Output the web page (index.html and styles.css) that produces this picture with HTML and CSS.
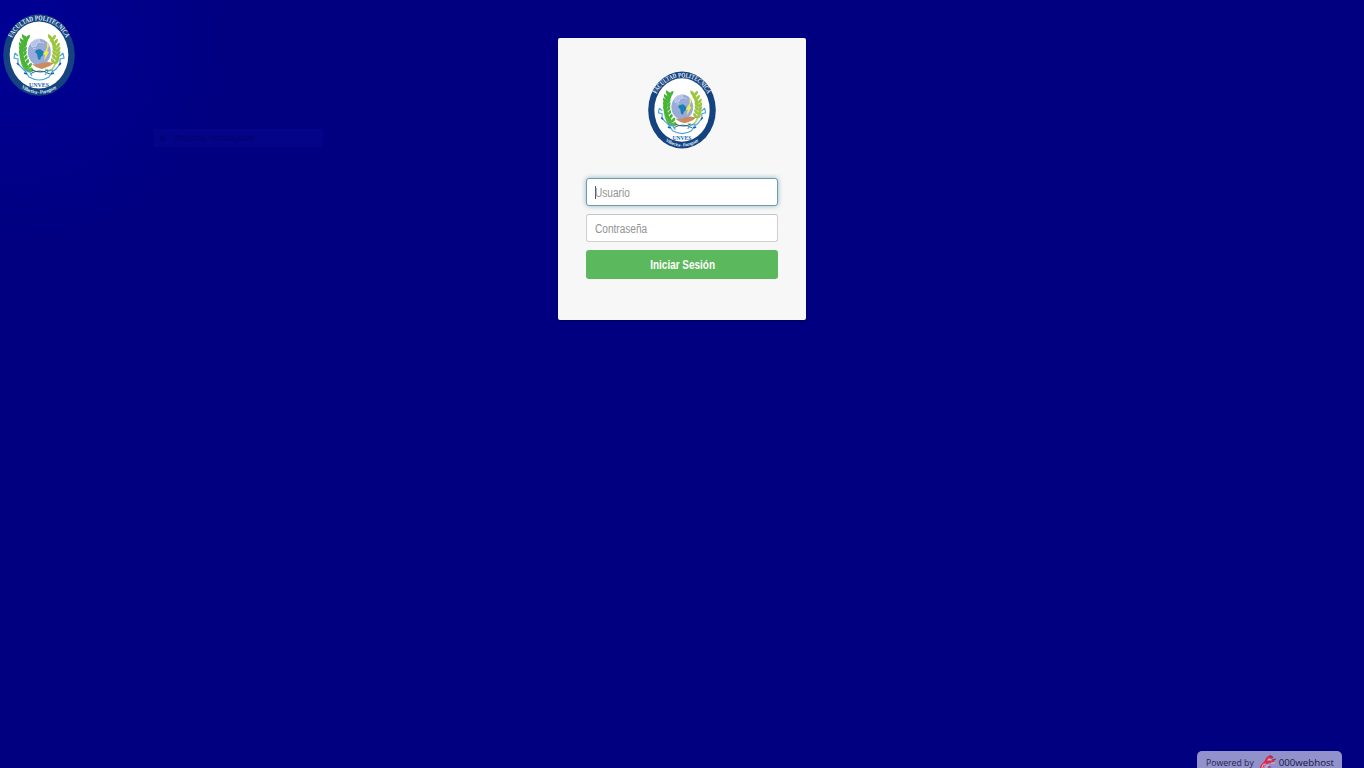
FILE: index.html
```html
<!DOCTYPE html>
<html lang="es">
<head>
<meta charset="utf-8">
<title>Iniciar Sesión</title>
<link rel="stylesheet" href="styles.css">
</head>
<body>
<svg class="defs" aria-hidden="true">
  <defs>
    <path id="arc-top" d="M8.5 25.5C19 0 53 0 63.5 25.5"/>
    <path id="arc-bottom" d="M15 71.5Q36 88 57 71.5"/>
    <path id="leaf" d="M0 0Q-5-1-4-6Q1-4 0 0Q0-5 4-5Q4 0 0 0"/>
    <symbol id="crest" viewBox="0 0 72 82">
      <ellipse cx="36" cy="41" rx="35.8" ry="40.8" fill="#15437f"/>
      <ellipse cx="36" cy="41" rx="29.3" ry="33.6" fill="#fff"/>
      <text class="crest-name"><textPath href="#arc-top" startOffset="50%" text-anchor="middle" textLength="68" lengthAdjust="spacingAndGlyphs">FACULTAD POLITECNICA</textPath></text>
      <path d="M24 23Q16 34 19.500 47T30 55" fill="none" stroke="#55b741" stroke-width="4"/>
      <g fill="#48b435">
        <use href="#leaf" x="23" y="26"/><use href="#leaf" x="21" y="30"/><use href="#leaf" x="20" y="34"/><use href="#leaf" x="20" y="38"/><use href="#leaf" x="20" y="42"/><use href="#leaf" x="21" y="46"/><use href="#leaf" x="22.500" y="50"/><use href="#leaf" x="25" y="54"/>
      </g>
      <path d="M48 23Q57 36 53 48T42 55" fill="none" stroke="#b9d878" stroke-width="2"/>
      <g fill="#9cc53f">
        <use href="#leaf" x="49" y="26"/><use href="#leaf" x="51" y="30"/><use href="#leaf" x="53" y="34"/><use href="#leaf" x="53.500" y="38"/><use href="#leaf" x="53.500" y="42"/><use href="#leaf" x="53" y="46"/><use href="#leaf" x="52" y="50"/>
      </g>
      <ellipse cx="36.300" cy="38" rx="12.500" ry="14" fill="#fff"/>
      <ellipse cx="36.300" cy="38" rx="11.500" ry="13.300" fill="#98abd9"/>
      <path d="M28 30l3-4 5-1 1 3-3 1-1 3-4 1zM30 35l3-1M37 28l4 1" fill="#b4c3e6" stroke="#d5def0" stroke-width=".7"/>
      <path d="M33 36l4-1 4 3-1 3-2 2-1 3-2-1-1-5-2-2z" fill="#1a7fb5"/>
      <path d="M44 27l2 5-2 5 2 1-5 9 1-6-2-1 4-6z" fill="#f0ed4b"/>
      <path d="M29 50q6 1 10-1l6-1 6 1-4 3-8 3q-6-1-10-5z" fill="#c98b5f"/>
      <path d="M27 60q9-6 20 0M29 56q9 4 16 0" fill="none" stroke="#286184" stroke-width="1"/>
      <path d="M12 39l-1 5 4 1 0 5 4 4 4 4 3 5q10 6 20 0l3-5 4-3 4-5 0-5 4-1-1-5M12 39l3 3M60 39l-3 3M21 56l5 1 3 5M50 56l-5 1-3 4" fill="none" stroke="#4aa5dc" stroke-width="1.200"/>
      <path d="M14 49l2 2M21 59l3 1M51 59l-3 1M58 49l-2 2" stroke="#1d60a5" stroke-width="1.700"/>
      <text x="36" y="73" class="crest-short" text-anchor="middle" textLength="20">UNVES</text>
      <text class="crest-place"><textPath href="#arc-bottom" startOffset="50%" text-anchor="middle" textLength="38">Villarrica - Paraguay</textPath></text>
    </symbol>
  </defs>
</svg>
<div class="brand"><svg class="brand-logo"><use href="#crest"/></svg></div>
<div class="ghost"><i class="ghost-icon"></i><span class="ghost-text">Recorte rectangular</span></div>
<main class="card">
  <svg class="card-logo"><use href="#crest"/></svg>
  <form class="form">
    <div class="field field-focus"><i class="caret"></i><span class="narrow">Usuario</span></div>
    <div class="field"><span class="narrow">Contraseña</span></div>
    <button class="submit" type="button"><span class="narrow-center">Iniciar Sesión</span></button>
  </form>
</main>
<div class="host">
  <span>Powered by</span>
  <svg class="host-icon" viewBox="0 0 18 16">
    <path d="M1 16q-1-6 3-8 2-2 3-5 3-4 7-1l-1 2q-4-2-5 2l8-1-1 2-8 2q-4 2-3 7z" fill="#dd2945"/>
    <path d="M3 13q0-4 4-4M7 15q-1-4 3-5M9 4l3 1M12 8l4 0" fill="none" stroke="#f3a5bd" stroke-width="1.1"/>
    <path d="M10 1q3-1 4 2M13 5l4-1M9 12l3 0" fill="none" stroke="#8a2857"/>
  </svg>
  <span class="host-name">000webhost</span>
</div>
</body>
</html>
```
FILE: styles.css
```css
* { box-sizing: border-box; }
body {
  margin: 0;
  height: 768px;
  position: relative;
  overflow: hidden;
  padding-top: 38px;
  background: radial-gradient(ellipse 210px 210px at 20px 40px, #000096, #000080) #000080;
  font-family: "Liberation Sans", Arial, sans-serif;
}
.defs { position: absolute; width: 0; height: 0; }
.crest-name { font: bold 7.2px "Liberation Serif", serif; fill: #e6eefb; }
.crest-short { font: bold 6px "Liberation Serif", serif; fill: #2363ad; }
.crest-place { font: bold 5px "Liberation Serif", serif; fill: #dfe9f7; }
.brand { position: absolute; left: 3px; top: 14px; }
.brand-logo { display: block; width: 72px; height: 82px; }
.ghost {
  position: absolute;
  left: 154px;
  top: 129px;
  width: 169px;
  height: 18px;
  display: flex;
  align-items: center;
  gap: 10px;
  padding-left: 6px;
  background: #040488;
}
.ghost-icon { width: 5px; height: 6px; background: #02027b; }
.ghost-text { font-size: 9px; line-height: 12px; color: #020270; white-space: nowrap; }
.card {
  width: 248px;
  height: 282px;
  margin: 0 auto;
  padding: 33px 28px 0;
  background: #f7f7f7;
  border-radius: 2px;
  box-shadow: 0 1px 2px rgba(0, 0, 0, .3);
}
.card-logo { display: block; width: 68px; height: 78px; margin: 0 auto 29px; }
.form { display: flex; flex-direction: column; gap: 8px; }
.field {
  display: flex;
  align-items: center;
  height: 28px;
  padding: 1px 0 0 8px;
  border: 1px solid #d0d0d0;
  border-top-color: #c4c4c4;
  border-radius: 3px;
  background: #fff;
  color: #929292;
  font-size: 12px;
}
.field-focus { border-color: #6f9cab; box-shadow: 0 0 5px rgba(88, 148, 170, .65); }
.caret { width: 1px; height: 13px; margin-right: -1px; background: #555; }
.narrow { display: inline-block; transform: scaleX(.84); transform-origin: left; }
.narrow-center { display: inline-block; transform: translateX(.6px) scaleX(.83); }
.submit {
  height: 29px;
  padding: 0;
  border: 0;
  border-radius: 3px;
  background: #5cb85c;
  color: #fff;
  font: bold 12px "Liberation Sans", Arial, sans-serif;
}
.host {
  position: absolute;
  left: 1197px;
  top: 751px;
  width: 145px;
  height: 22px;
  display: flex;
  align-items: center;
  padding: 2px 0 0 9px;
  border-radius: 5px 5px 0 0;
  background: #9191cb;
  color: #26264c;
  font: 8.700px/20px "Open Sans", sans-serif;
  white-space: nowrap;
}
.host-icon { width: 18px; height: 16px; margin: 0 2px 0 5px; }
.host-name { font-size: 9.700px; color: #17173e; }
```
